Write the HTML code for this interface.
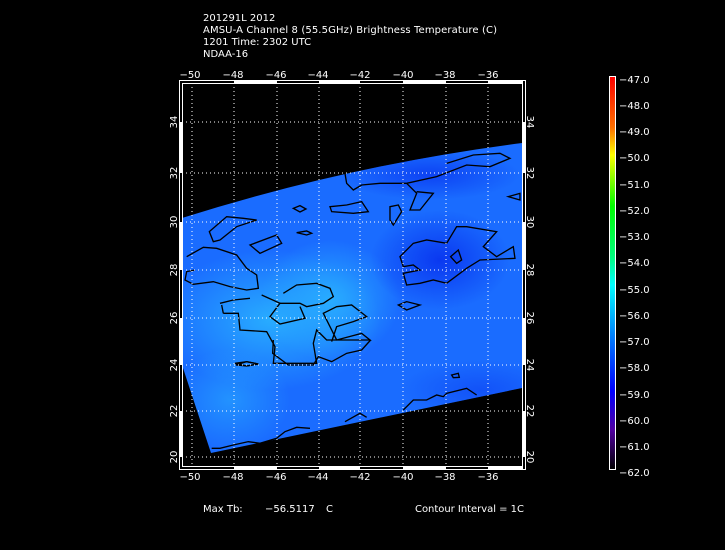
<!DOCTYPE html>
<html><head><style>
html,body{margin:0;padding:0;background:#000;width:725px;height:550px;overflow:hidden}
svg{display:block}
text{font-family:"DejaVu Sans","Liberation Sans",sans-serif;font-size:10px;fill:#fff}
</style></head><body>
<svg width="725" height="550" viewBox="0 0 725 550">
<defs>
<linearGradient id="cb" x1="0" y1="0" x2="0" y2="1">
<stop offset="0" stop-color="#ff0000"/>
<stop offset="0.13" stop-color="#ff7000"/>
<stop offset="0.2" stop-color="#ffff00"/>
<stop offset="0.33" stop-color="#00ff00"/>
<stop offset="0.46" stop-color="#00ff80"/>
<stop offset="0.53" stop-color="#00ffff"/>
<stop offset="0.66" stop-color="#0080ff"/>
<stop offset="0.8" stop-color="#0000ff"/>
<stop offset="0.9" stop-color="#5000a0"/>
<stop offset="1" stop-color="#000000"/>
</linearGradient>
<radialGradient id="l1" cx="0.5" cy="0.5" r="0.5"><stop offset="0" stop-color="#28acff"/><stop offset="1" stop-color="#28acff" stop-opacity="0"/></radialGradient>
<radialGradient id="d1" cx="0.5" cy="0.5" r="0.5"><stop offset="0" stop-color="#0a38f0"/><stop offset="1" stop-color="#0a38f0" stop-opacity="0"/></radialGradient>
<clipPath id="dc"><path d="M182,218 Q350,165 522,143 L522,388 L211,453 L182,365 Z"/></clipPath>
</defs>
<text x="203" y="21">201291L 2012</text>
<text x="203" y="33" textLength="294">AMSU-A Channel 8 (55.5GHz) Brightness Temperature (C)</text>
<text x="203" y="45">1201 Time: 2302 UTC</text>
<text x="203" y="57">NDAA-16</text>
<g clip-path="url(#dc)">
<rect x="180" y="140" width="345" height="320" fill="#1a6cff"/>
<ellipse cx="270" cy="320" rx="110" ry="70" fill="url(#l1)"/>
<ellipse cx="330" cy="300" rx="70" ry="60" fill="url(#l1)"/>
<ellipse cx="230" cy="400" rx="60" ry="50" fill="url(#l1)" opacity="0.6"/>
<ellipse cx="440" cy="260" rx="70" ry="50" fill="url(#d1)"/>
<ellipse cx="430" cy="175" rx="90" ry="25" fill="url(#d1)" opacity="0.8"/>
<ellipse cx="480" cy="390" rx="80" ry="30" fill="url(#d1)" opacity="0.5"/>
</g>
<g transform="translate(180,140) scale(0.3333)" fill="none" stroke="#000" stroke-width="4">
<path d="M495,100 L500,130 L520,150 L545,135 L600,130 L680,130 L770,110 L860,75 L930,80 L990,55 L960,40 L880,45 L800,70"/>
<path d="M680,130 L710,160 L690,210 L720,210 L760,160 L710,155"/>
<path d="M630,200 L655,195 L665,215 L640,255 L630,240 Z"/>
<path d="M450,200 L500,195 L545,185 L565,215 L520,220 L455,215 Z"/>
<path d="M340,205 L360,197 L378,207 L360,216 Z"/>
<path d="M350,278 L380,273 L395,280 L380,285 Z"/>
<path d="M88,275 L140,230 L190,235 L230,240 L170,260 L120,300 L100,305 Z"/>
<path d="M210,315 L290,285 L305,310 L240,340 Z"/>
<path d="M20,350 L70,322 L110,325 L170,345 L200,385 L230,405 L235,445 L200,450 L150,440 L100,425 L40,433 L15,420 L20,395 L45,390"/>
<path d="M660,350 L700,310 L740,300 L800,310 L830,260 L860,260 L950,275 L910,320 L950,350 L1000,320 L1005,355 L900,360 L860,385 L800,430 L760,420 L720,430 L680,435 L670,400 L720,390 L700,375 L670,380 Z"/>
<path d="M812,350 L835,330 L845,360 L830,370 Z"/>
<path d="M310,460 L350,435 L410,430 L450,445 L460,470 L430,490 L380,500 L360,490 L300,490"/>
<path d="M245,465 L300,490 L270,530 L300,552 L375,535 L360,500"/>
<path d="M120,490 L160,480 L210,475 M130,520 L125,495 M130,520 L175,520 L180,570 L260,575 L285,620 L280,670 L410,670 L400,610 L410,570 L440,600 L500,600 L570,600 L545,580 L470,600 L430,520 L470,500 L515,495 L560,530 L520,545 L470,560 L455,605"/>
<path d="M655,495 L680,485 L720,495 L680,510 Z"/>
<path d="M165,670 L200,665 L235,672 L200,678 Z"/>
<path d="M985,170 L1020,160 L1020,180 Z"/>
</g>
<g transform="translate(160,340) scale(0.3333)" fill="none" stroke="#000" stroke-width="4">
<path d="M228,75 L260,65 L295,72 L260,78 Z"/>
<path d="M155,325 L180,325 L220,315 L265,305 L300,310 L350,295 L375,275 L410,262 L450,265"/>
<path d="M555,245 L600,220 L620,232"/>
<path d="M730,210 L760,180 L800,180 L830,165 L850,170 L860,160 L920,145 L950,165"/>
<path d="M875,105 L895,100 L898,112 L880,113 Z"/>
<path d="M340,0 L338,40 L385,75 L460,75 L475,50 L515,65 L560,40 L605,30 L632,0"/>
</g>
<g stroke="#fff" stroke-width="1" stroke-dasharray="1,3">
<line x1="192" y1="83" x2="192" y2="466"/><line x1="234" y1="83" x2="234" y2="466"/>
<line x1="277" y1="83" x2="277" y2="466"/><line x1="319" y1="83" x2="319" y2="466"/>
<line x1="360" y1="83" x2="360" y2="466"/><line x1="403" y1="83" x2="403" y2="466"/>
<line x1="446" y1="83" x2="446" y2="466"/><line x1="488" y1="83" x2="488" y2="466"/>
<line x1="182" y1="122" x2="522" y2="122"/><line x1="182" y1="173" x2="522" y2="173"/>
<line x1="182" y1="222" x2="522" y2="222"/><line x1="182" y1="270" x2="522" y2="270"/>
<line x1="182" y1="318" x2="522" y2="318"/><line x1="182" y1="365" x2="522" y2="365"/>
<line x1="182" y1="411" x2="522" y2="411"/><line x1="182" y1="457" x2="522" y2="457"/>
</g>
<rect x="179.5" y="80.5" width="346" height="389" fill="none" stroke="#fff"/>
<rect x="182.5" y="83.5" width="340" height="383" fill="none" stroke="#fff"/>
<g fill="#fff">
<rect x="234" y="80" width="43" height="3"/><rect x="319" y="80" width="41" height="3"/><rect x="403" y="80" width="43" height="3"/><rect x="488" y="80" width="35" height="3"/>
<rect x="234" y="466" width="43" height="3"/><rect x="319" y="466" width="41" height="3"/><rect x="403" y="466" width="43" height="3"/><rect x="488" y="466" width="35" height="3"/>
<rect x="179" y="122" width="3" height="51"/><rect x="179" y="222" width="3" height="48"/><rect x="179" y="318" width="3" height="47"/><rect x="179" y="411" width="3" height="46"/>
<rect x="522" y="122" width="3" height="51"/><rect x="522" y="222" width="3" height="48"/><rect x="522" y="318" width="3" height="47"/><rect x="522" y="411" width="3" height="46"/>
</g>
<g text-anchor="middle">
<text x="190" y="78">−50</text><text x="233" y="78">−48</text><text x="276" y="78">−46</text><text x="318" y="78">−44</text><text x="360" y="78">−42</text><text x="403" y="78">−40</text><text x="445" y="78">−38</text><text x="488" y="78">−36</text>
<text x="190" y="480">−50</text><text x="233" y="480">−48</text><text x="276" y="480">−46</text><text x="318" y="480">−44</text><text x="360" y="480">−42</text><text x="403" y="480">−40</text><text x="445" y="480">−38</text><text x="488" y="480">−36</text>
<text transform="translate(177,122) rotate(-90)">34</text><text transform="translate(177,173) rotate(-90)">32</text><text transform="translate(177,222) rotate(-90)">30</text><text transform="translate(177,270) rotate(-90)">28</text><text transform="translate(177,318) rotate(-90)">26</text><text transform="translate(177,365) rotate(-90)">24</text><text transform="translate(177,411) rotate(-90)">22</text><text transform="translate(177,457) rotate(-90)">20</text>
<text transform="translate(527,122) rotate(90)">34</text><text transform="translate(527,173) rotate(90)">32</text><text transform="translate(527,222) rotate(90)">30</text><text transform="translate(527,270) rotate(90)">28</text><text transform="translate(527,318) rotate(90)">26</text><text transform="translate(527,365) rotate(90)">24</text><text transform="translate(527,411) rotate(90)">22</text><text transform="translate(527,457) rotate(90)">20</text>
</g>
<rect x="609.5" y="76.5" width="6" height="393" fill="url(#cb)" stroke="#fff"/>
<g>
<text x="619" y="83">−47.0</text><text x="619" y="109">−48.0</text><text x="619" y="135">−49.0</text><text x="619" y="161">−50.0</text><text x="619" y="188">−51.0</text><text x="619" y="214">−52.0</text><text x="619" y="240">−53.0</text><text x="619" y="266">−54.0</text><text x="619" y="293">−55.0</text><text x="619" y="319">−56.0</text><text x="619" y="345">−57.0</text><text x="619" y="371">−58.0</text><text x="619" y="398">−59.0</text><text x="619" y="424">−60.0</text><text x="619" y="450">−61.0</text><text x="619" y="476">−62.0</text>
</g>
<text x="203" y="512">Max Tb:</text><text x="265" y="512">−56.5117</text><text x="326" y="512">C</text>
<text x="415" y="512" textLength="109">Contour Interval = 1C</text>
</svg>
</body></html>
